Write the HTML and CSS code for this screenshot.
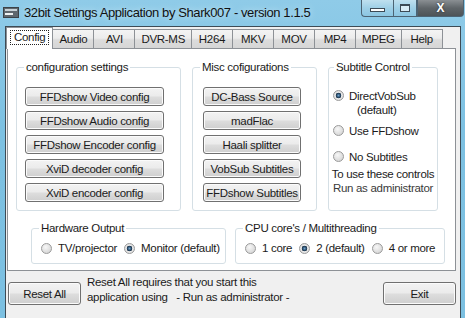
FILE: index.html
```html
<!DOCTYPE html>
<html lang="en">
<head>
    <meta charset="UTF-8" />
    <title>32bit Settings Application by Shark007 - version 1.1.5</title>
    <link rel="stylesheet" href="styles.css">
</head>
<body>
<div class="window">

    <!-- Title bar -->
    <div class="titlebar">
        <svg class="app-icon" width="16" height="11" viewBox="0 0 16 11">
            <rect x="0.5" y="0.5" width="15" height="10" fill="#5f686e" stroke="#3b4247" />
            <rect x="2" y="2" width="12" height="2" fill="#c8d2d7" />
            <rect x="2" y="6" width="8" height="2" fill="#eef2f3" />
        </svg>
        <span class="title">32bit Settings Application by Shark007 - version 1.1.5</span>
        <div class="caption">
            <span class="cap cap-min"><i></i></span>
            <span class="cap cap-max"><i></i></span>
            <span class="cap cap-close">X</span>
        </div>
    </div>

    <div class="client">
        <!-- Tabs -->
        <div class="tabs">
            <span class="tab active"><span class="focus">Config</span></span>
            <span class="tab">Audio</span>
            <span class="tab">AVI</span>
            <span class="tab">DVR-MS</span>
            <span class="tab">H264</span>
            <span class="tab">MKV</span>
            <span class="tab">MOV</span>
            <span class="tab">MP4</span>
            <span class="tab">MPEG</span>
            <span class="tab">Help</span>
        </div>

        <div class="panel">
            <div class="row row-top">
                <fieldset class="group group-config">
                    <legend>configuration settings</legend>
                    <div class="btn-list">
                        <button class="btn">FFDshow Video config</button>
                        <button class="btn">FFDshow Audio config</button>
                        <button class="btn">FFDshow Encoder config</button>
                        <button class="btn">XviD decoder config</button>
                        <button class="btn">XviD encoder config</button>
                    </div>
                </fieldset>

                <fieldset class="group group-misc">
                    <legend>Misc cofigurations</legend>
                    <div class="btn-list">
                        <button class="btn">DC-Bass Source</button>
                        <button class="btn">madFlac</button>
                        <button class="btn">Haali splitter</button>
                        <button class="btn">VobSub Subtitles</button>
                        <button class="btn">FFDshow Subtitles</button>
                    </div>
                </fieldset>

                <fieldset class="group group-subs">
                    <legend>Subtitle Control</legend>
                    <div class="opt opt-first">
                        <span class="radio checked"></span>
                        <span class="opt-text">DirectVobSub<br><span class="indent">(default)</span></span>
                    </div>
                    <div class="opt opt-second">
                        <span class="radio"></span>
                        <span class="opt-text">Use FFDshow</span>
                    </div>
                    <div class="opt opt-third">
                        <span class="radio"></span>
                        <span class="opt-text">No Subtitles</span>
                    </div>
                    <p class="note">To use these controls<br><span class="muted">Run as administrator</span></p>
                </fieldset>
            </div>

            <div class="row row-bottom">
                <fieldset class="group group-hw">
                    <legend>Hardware Output</legend>
                    <div class="inline-opts">
                        <span class="iopt"><span class="radio"></span>TV/projector</span>
                        <span class="iopt"><span class="radio checked"></span>Monitor (default)</span>
                    </div>
                </fieldset>

                <fieldset class="group group-cpu">
                    <legend>CPU core's / Multithreading</legend>
                    <div class="inline-opts">
                        <span class="iopt"><span class="radio"></span>1 core</span>
                        <span class="iopt"><span class="radio checked"></span>2 (default)</span>
                        <span class="iopt"><span class="radio"></span>4 or more</span>
                    </div>
                </fieldset>
            </div>
        </div>

        <!-- Footer -->
        <div class="footer">
            <button class="btn btn-wide">Reset All</button>
            <p class="footer-text">Reset All requires that you start this<br>application using &nbsp; - Run as administrator -</p>
            <button class="btn btn-wide btn-exit">Exit</button>
        </div>
    </div>
</div>
</body>
</html>
```

FILE: styles.css
```css
* {
    box-sizing: border-box;
}

body {
    margin: 0;
    width: 465px;
    height: 318px;
    overflow: hidden;
    background: #80c4e3;
    font-family: "Liberation Sans", Arial, sans-serif;
    font-size: 11.5px;
    letter-spacing: -0.3px;
    color: #1b1b1b;
}

.window {
    height: 318px;
    display: flex;
    flex-direction: column;
    background: linear-gradient(180deg, #8fcbe8 0%, #7dc1e2 40%, #7cc0e1 100%);
}

/* title bar */
.titlebar {
    height: 26px;
    display: flex;
    align-items: flex-start;
}

.app-icon {
    margin: 7px 0 0 3px;
}

.title {
    margin: 5px 0 0 5px;
    font-size: 13px;
    letter-spacing: -0.4px;
    line-height: 16px;
    color: #111;
    text-shadow: 0 0 6px #cfeaf6;
}

.caption {
    margin-left: auto;
    margin-right: 1px;
    display: flex;
    height: 17px;
}

.cap {
    height: 17px;
    display: flex;
    align-items: center;
    justify-content: center;
    border: 1px solid #4c6373;
    border-top: none;
    background: linear-gradient(180deg, #bfe0ef 0%, #9fd0e7 50%, #8cc6e2 100%);
}

.cap-min {
    width: 32px;
    border-radius: 0 0 0 4px;
    border-right: none;
}

.cap-min i {
    display: block;
    width: 15px;
    height: 4px;
    margin-top: 4px;
    background: #fff;
    border: 1px solid #3c4a55;
}

.cap-max {
    width: 24px;
}

.cap-max i {
    display: block;
    width: 10px;
    height: 8px;
    border: 1px solid #3c4a55;
    border-top-width: 2px;
    background: #d9ecf5;
}

.cap-close {
    width: 47px;
    border-radius: 0 0 4px 0;
    background: linear-gradient(180deg, #8a8f93 0%, #5f6569 50%, #4d5357 100%);
    color: #fff;
    font-weight: bold;
    font-size: 12px;
    letter-spacing: 0;
    text-shadow: 0 0 2px #222;
}

/* client area */
.client {
    flex: 1;
    margin: 0 4px 0 5px;
    background: #f0f0f0;
    border: 1px solid #3d4b55;
    border-bottom: none;
}

.tabs {
    display: flex;
    height: 21px;
    position: relative;
    z-index: 1;
}

.tab {
    min-width: 41px;
    height: 19px;
    margin-top: 2px;
    padding: 0 6px;
    text-align: center;
    line-height: 18px;
    border: 1px solid #8d9196;
    border-left: none;
    border-bottom: none;
    background: linear-gradient(180deg, #f4f4f4 0%, #ececec 45%, #dcdcdc 55%, #d6d6d6 100%);
}

.tab.active {
    min-width: 47px;
    height: 22px;
    margin-top: 0;
    padding: 2px 3px 0;
    border-left: 1px solid #8d9196;
    background: #fff;
    line-height: 14px;
}

.focus {
    display: block;
    padding: 0 3px;
    border: 1px dotted #222;
    line-height: 13px;
    height: 15px;
}

.panel {
    height: 223px;
    margin: 0 4px 0 1px;
    background: #fff;
    border: 1px solid #8d9196;
    padding: 11px 0 0 8px;
}

.row {
    display: flex;
}

.row-top {
    gap: 11px;
}

.row-bottom {
    margin: 10px 0 0 15px;
    gap: 9px;
}

.group {
    margin: 0;
    padding: 0 0 0 8px;
    border: 1px solid #d5dfe5;
    border-radius: 3px;
}

.group legend {
    margin-left: -1px;
    padding: 0 2px;
    line-height: 14px;
}

.group-config {
    width: 165px;
    height: 151px;
}

.group-misc {
    width: 125px;
    height: 151px;
    padding-left: 10px;
}

.group-misc legend {
    margin-left: -3px;
}

.group-subs {
    width: 110px;
    height: 151px;
    padding-left: 4px;
}

.group-subs legend {
    margin-left: 1px;
}

.group-hw {
    width: 195px;
    height: 43px;
}

.group-cpu {
    width: 210px;
    height: 43px;
}

.btn-list {
    display: flex;
    flex-direction: column;
    gap: 5px;
    margin-top: 13px;
}

.btn {
    height: 19px;
    padding: 0;
    font: inherit;
    letter-spacing: inherit;
    color: #1b1b1b;
    border: 1px solid #707070;
    border-radius: 3px;
    background: linear-gradient(180deg, #f3f3f3 0%, #ebebeb 48%, #dddddd 52%, #cfcfcf 100%);
    box-shadow: inset 0 0 0 1px #fbfbfb;
}

.group-config .btn {
    width: 139px;
}

.group-misc .btn {
    width: 98px;
}

/* radios */
.radio {
    flex: none;
    width: 11px;
    height: 11px;
    border-radius: 50%;
    border: 1px solid #9a9a9a;
    background: radial-gradient(circle at 40% 35%, #f7f7f7 0%, #dedede 60%, #cdcdcd 100%);
}

.radio.checked {
    background: radial-gradient(circle, #6fa0c8 0%, #274a6a 30%, #1d2f40 42%, #e9e9e9 48%, #d4d4d4 100%);
}

.opt {
    display: flex;
    align-items: flex-start;
    line-height: 14px;
}

.opt .radio {
    margin: 1px 5px 0 0;
}

.opt-first {
    margin-top: 15px;
}

.opt-second {
    margin-top: 7px;
}

.opt-third {
    margin-top: 12px;
}

.indent {
    padding-left: 8px;
}

.note {
    margin: 3px 0 0 -4px;
    text-align: center;
    line-height: 14px;
    white-space: nowrap;
}

.muted {
    color: #3a3a3a;
}

.inline-opts {
    display: flex;
    gap: 7px;
    margin-top: 6px;
    padding-left: 1px;
    line-height: 14px;
    white-space: nowrap;
}

.iopt {
    display: flex;
    align-items: center;
}

.iopt .radio {
    margin-right: 6px;
}

/* footer */
.footer {
    display: flex;
    align-items: flex-start;
    padding: 11px 4px 0 2px;
}

.btn-wide {
    width: 73px;
    height: 23px;
}

.footer-text {
    margin: -7px 0 0 6px;
    line-height: 15px;
}

.btn-exit {
    margin-left: auto;
}
```
